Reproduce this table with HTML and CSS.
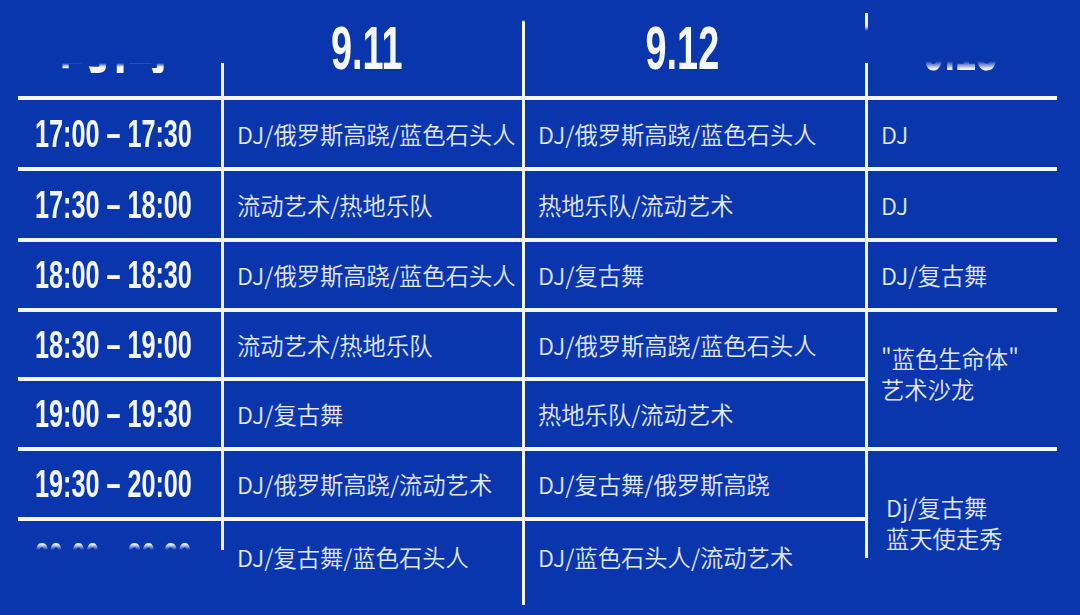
FILE: index.html
```html
<!DOCTYPE html>
<html lang="zh-CN">
<head>
<meta charset="utf-8">
<title>演出时间表</title>
<link rel="stylesheet" href="styles.css">
</head>
<body>
<div class="page">
  <div class="grid">
    <div class="head c1"><div class="clip-cn"><span class="hd-cn">时间</span></div></div>
    <div class="head c2"><span class="hd">9.11</span></div>
    <div class="head c3"><span class="hd">9.12</span></div>
    <div class="head c4"><div class="clip-date"><span class="hd">9.13</span></div></div>

    <div class="cell time"><span class="tm">17:00 – 17:30</span></div>
    <div class="cell txt">DJ/俄罗斯高跷/蓝色石头人</div>
    <div class="cell txt">DJ/俄罗斯高跷/蓝色石头人</div>
    <div class="cell txt">DJ</div>

    <div class="cell time"><span class="tm">17:30 – 18:00</span></div>
    <div class="cell txt">流动艺术/热地乐队</div>
    <div class="cell txt">热地乐队/流动艺术</div>
    <div class="cell txt">DJ</div>

    <div class="cell time"><span class="tm">18:00 – 18:30</span></div>
    <div class="cell txt">DJ/俄罗斯高跷/蓝色石头人</div>
    <div class="cell txt">DJ/复古舞</div>
    <div class="cell txt">DJ/复古舞</div>

    <div class="cell time"><span class="tm">18:30 – 19:00</span></div>
    <div class="cell txt">流动艺术/热地乐队</div>
    <div class="cell txt">DJ/俄罗斯高跷/蓝色石头人</div>
    <div class="cell txt merge merge-a"><div>"蓝色生命体"<br>艺术沙龙</div></div>

    <div class="cell time"><span class="tm">19:00 – 19:30</span></div>
    <div class="cell txt">DJ/复古舞</div>
    <div class="cell txt">热地乐队/流动艺术</div>

    <div class="cell time"><span class="tm">19:30 – 20:00</span></div>
    <div class="cell txt">DJ/俄罗斯高跷/流动艺术</div>
    <div class="cell txt">DJ/复古舞/俄罗斯高跷</div>
    <div class="cell txt merge merge-b"><div>Dj/复古舞<br>蓝天使走秀</div></div>

    <div class="cell time time-last"><div class="clip-time"><span class="tm">20:00 – 20:30</span></div></div>
    <div class="cell txt last short-line">DJ/复古舞/蓝色石头人</div>
    <div class="cell txt last">DJ/蓝色石头人/流动艺术</div>
  </div>
</div>
</body>
</html>
```

FILE: styles.css
```css
html, body {
  margin: 0;
  padding: 0;
  background: #0a36ad;
}

.page {
  width: 1080px;
  height: 615px;
  overflow: hidden;
  background: #0a36ad;
  font-family: "Noto Sans CJK SC", "Noto Sans", sans-serif;
  color: #e3e9f8;
}

.grid {
  display: grid;
  grid-template-columns: 203px 301px 343px 192px;
  grid-template-rows: 83px 71px 71px 70px 69px 70px 70px 88px;
  margin-left: 18px;
  padding-top: 13px;
  width: 1039px;
}

/* ---------- header row ---------- */
.head {
  box-sizing: border-box;
  min-width: 0;
  padding-left: 3px;
  background-repeat: no-repeat;
  background-position: left top;
  background-size: 3px 100%;
}
.head.c1 {
  padding-left: 0;
}
.head.c2 {
  display: flex;
  justify-content: center;
  align-items: flex-start;
  padding-top: 5px;
  padding-right: 12px;
  background-image: linear-gradient(to bottom, transparent 50px, #f3f6fc 50px);
}
.head.c3 {
  display: flex;
  justify-content: center;
  align-items: flex-start;
  padding-top: 5px;
  padding-right: 26px;
  background-image: linear-gradient(to bottom, transparent 7px, #f3f6fc 9px);
}
.head.c4 {
  padding-right: 4px;
  background-image: linear-gradient(to bottom, #f3f6fc 0, #f3f6fc 13px, transparent 18px, transparent 50px, #f3f6fc 50px);
}

.hd {
  display: inline-block;
  font-family: "Liberation Sans", "DejaVu Sans", sans-serif;
  font-weight: 700;
  font-size: 61px;
  line-height: 1;
  color: #f6f8fe;
  transform: scaleX(0.62);
  transform-origin: center;
}

/* blurred-out header labels: only their lower edge shows */
.clip-cn {
  margin-top: 50px;
  height: 10px;
  overflow: hidden;
  display: flex;
  align-items: flex-end;
  padding-left: 41px;
  -webkit-mask-image: linear-gradient(to bottom, transparent 0, #000 4px);
  mask-image: linear-gradient(to bottom, transparent 0, #000 4px);
}
.hd-cn {
  font-family: "Noto Sans CJK SC", sans-serif;
  font-weight: 700;
  font-size: 54px;
  line-height: 1;
  color: #f6f8fe;
  white-space: nowrap;
}

.clip-date {
  margin-top: 48px;
  height: 19px;
  overflow: hidden;
  display: flex;
  justify-content: center;
  align-items: flex-end;
  -webkit-mask-image: linear-gradient(to bottom, transparent 0, #000 8px);
  mask-image: linear-gradient(to bottom, transparent 0, #000 8px);
}

/* ---------- body cells ---------- */
.cell {
  display: flex;
  align-items: center;
  box-sizing: border-box;
  border-top: 4px solid #f3f6fc;
  min-width: 0;
}

.time {
  padding-left: 17px;
}
.tm {
  display: inline-block;
  font-family: "Liberation Sans", "DejaVu Sans", sans-serif;
  font-weight: 700;
  font-size: 38px;
  line-height: 1;
  color: #f4f7fe;
  white-space: nowrap;
  transform: scaleX(0.663);
  transform-origin: left center;
}

.txt {
  border-left: 3px solid #f3f6fc;
  padding-left: 13px;
  font-size: 23.3px;
  font-weight: 350;
  white-space: nowrap;
}

.merge {
  grid-column: 4;
  grid-row: span 2;
  line-height: 31px;
}
.merge-a {
  padding-bottom: 12px;
}
.merge-b {
  border-left: none;
  padding-left: 21px;
  padding-bottom: 10px;
  background: linear-gradient(to bottom, #f3f6fc 0, #f3f6fc 107px, transparent 107px) no-repeat left top / 3px 100%;
}

.last {
  padding-bottom: 12px;
}
.short-line {
  border-left: none;
  padding-left: 16px;
  background: linear-gradient(to bottom, #f3f6fc 0, #f3f6fc 29px, transparent 29px) no-repeat left top / 3px 100%;
}

/* last time label, cut off by the photo's blur */
.time-last {
  align-items: flex-start;
}
.clip-time {
  height: 29px;
  overflow: hidden;
  -webkit-mask-image: linear-gradient(to bottom, #000 23px, transparent 29px);
  mask-image: linear-gradient(to bottom, #000 23px, transparent 29px);
}
.clip-time .tm {
  margin-top: 17px;
}
```
